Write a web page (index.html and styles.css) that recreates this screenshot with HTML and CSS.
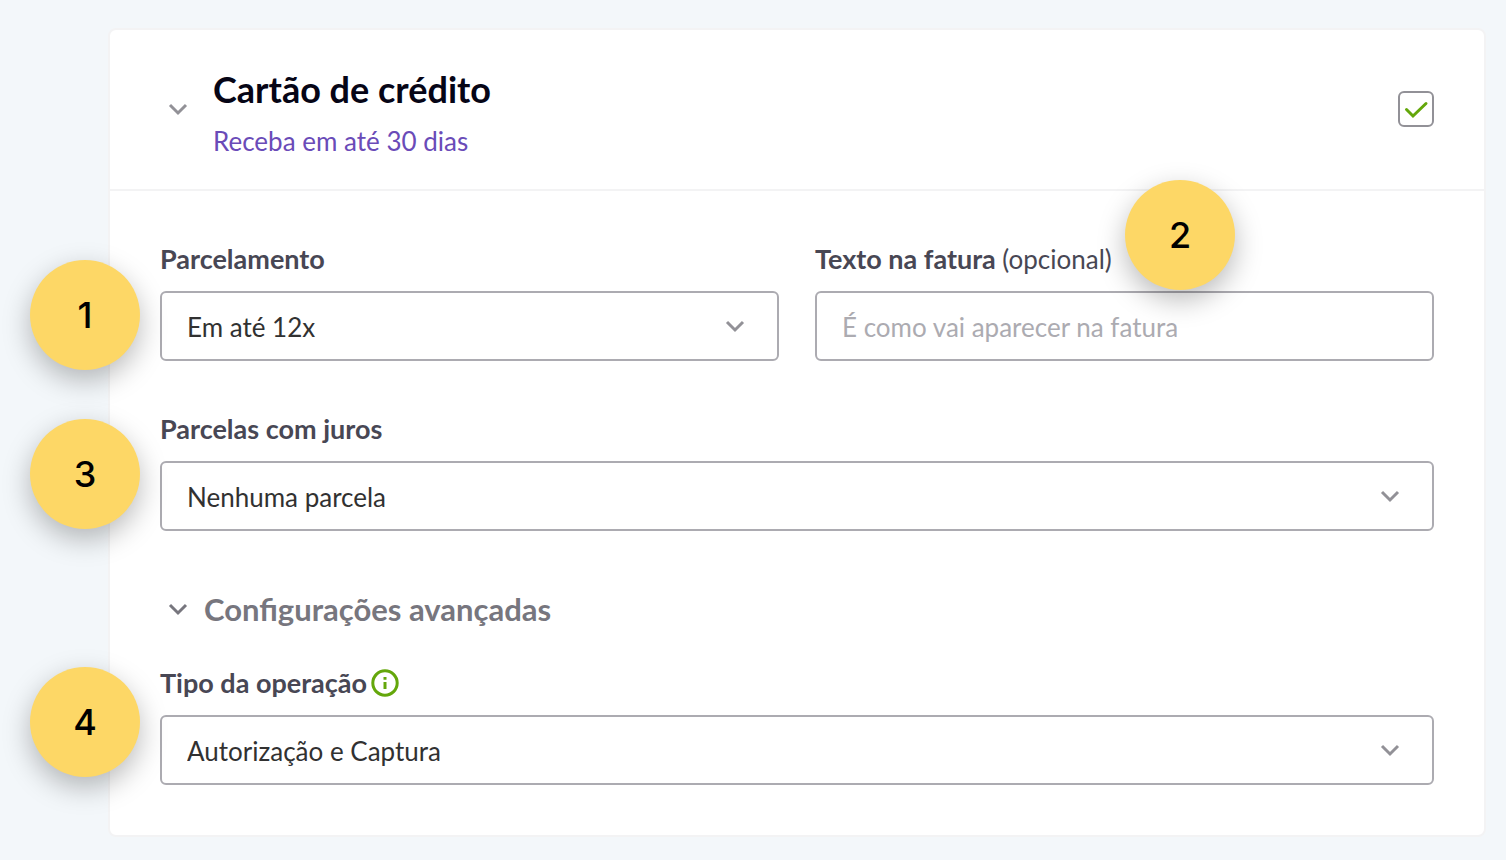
FILE: index.html
```html
<!DOCTYPE html>
<html lang="pt-BR">
<head>
<meta charset="utf-8">
<meta name="viewport" content="width=device-width, initial-scale=1">
<title>Cartão de crédito</title>
<link rel="stylesheet" href="styles.css">
</head>
<body>
<main class="page">
  <form class="card">
    <header class="card-header">
      <button class="icon-button" type="button" aria-label="Recolher cartão de crédito">
        <svg class="chevron" viewBox="0 0 36 36" aria-hidden="true"><path d="M10 14l8 8 8-8"/></svg>
      </button>
      <div class="heading">
        <h1 class="title">Cartão de crédito</h1>
        <p class="subtitle">Receba em até 30 dias</p>
      </div>
      <span class="check">
        <input class="check-input" type="checkbox" checked aria-label="Ativar cartão de crédito">
        <svg class="check-mark" viewBox="0 0 36 36" aria-hidden="true"><path d="M8.500 18.500l6.500 6.500L28 12.500"/></svg>
      </span>
    </header>
    <div class="card-body">
      <div class="row">
        <div class="field">
          <label class="label" for="parcelamento">Parcelamento</label>
          <div class="control">
            <select class="input" id="parcelamento"><option>Em até 12x</option></select>
            <svg class="chevron select-chevron" viewBox="0 0 36 36" aria-hidden="true"><path d="M10 14l8 8 8-8"/></svg>
          </div>
          <span class="badge badge-one">1</span>
        </div>
        <div class="field">
          <label class="label" for="fatura">Texto na fatura <span class="optional">(opcional)</span></label>
          <div class="control">
            <input class="input" id="fatura" type="text" placeholder="É como vai aparecer na fatura">
          </div>
          <span class="badge badge-two">2</span>
        </div>
      </div>
      <div class="field">
        <label class="label" for="juros">Parcelas com juros</label>
        <div class="control">
          <select class="input" id="juros"><option>Nenhuma parcela</option></select>
          <svg class="chevron select-chevron" viewBox="0 0 36 36" aria-hidden="true"><path d="M10 14l8 8 8-8"/></svg>
        </div>
        <span class="badge badge-three">3</span>
      </div>
      <section class="advanced">
        <button class="advanced-toggle" type="button">
          <svg class="chevron chevron-dark" viewBox="0 0 36 36" aria-hidden="true"><path d="M10 14l8 8 8-8"/></svg>
          Configurações avançadas
        </button>
        <div class="field">
          <div class="label-row">
            <label class="label" for="operacao">Tipo da operação</label>
            <svg class="info" viewBox="0 0 28 28" role="img" aria-label="Informação"><circle cx="14" cy="14" r="12.200"/><path d="M14 13v7M14 8v2.800"/></svg>
          </div>
          <div class="control">
            <select class="input" id="operacao"><option>Autorização e Captura</option></select>
            <svg class="chevron select-chevron" viewBox="0 0 36 36" aria-hidden="true"><path d="M10 14l8 8 8-8"/></svg>
          </div>
          <span class="badge badge-four">4</span>
        </div>
      </section>
    </div>
  </form>
</main>
</body>
</html>
```

FILE: styles.css
```css
* {
  box-sizing: border-box;
}

body {
  margin: 0;
  background: #f3f7fa;
  color: #484754;
  font-family: Lato, "Liberation Sans", sans-serif;
  font-size: 26px;
  line-height: 32px;
}

.page {
  padding: 28px 20px 22px 108px;
}

.card {
  background: #fff;
  border: 2px solid #f3f3f4;
  border-radius: 8px;
}

.card-header {
  display: flex;
  align-items: center;
  padding: 37px 50px 32px;
  border-bottom: 2px solid #f3f3f4;
}

.icon-button,
.advanced-toggle {
  padding: 0;
  border: 0;
  background: none;
  color: inherit;
  font: inherit;
  cursor: pointer;
}

.icon-button {
  display: flex;
  align-self: flex-start;
  margin-top: 24px;
}

.chevron {
  flex: none;
  width: 36px;
  height: 36px;
  fill: none;
  stroke: #929197;
  stroke-width: 3;
}

.chevron-dark {
  stroke: #77767e;
}

.heading {
  flex: 1;
  margin-left: 17px;
}

.title {
  margin: 0;
  color: #060516;
  font-size: 36px;
  font-weight: 700;
  line-height: 44px;
}

.subtitle {
  margin: 14px 0 0;
  color: #6a4bb8;
}

.check {
  position: relative;
  display: flex;
  align-self: flex-start;
  margin-top: 24px;
}

.check-input {
  appearance: none;
  width: 36px;
  height: 36px;
  margin: 0;
  border: 2px solid #929197;
  border-radius: 6px;
  background: #fff;
}

.check-mark {
  position: absolute;
  inset: 0;
  fill: none;
  stroke: #64a70b;
  stroke-width: 3;
  stroke-linecap: round;
  pointer-events: none;
}

.check-input:not(:checked) + .check-mark {
  display: none;
}

.card-body {
  display: flex;
  flex-direction: column;
  gap: 52px;
  padding: 52px 50px 50px;
}

.row {
  display: grid;
  grid-template-columns: 1fr 1fr;
  gap: 36px;
}

.field {
  position: relative;
}

.label {
  display: block;
  font-size: 27px;
  font-weight: 700;
}

.optional {
  font-size: 26px;
  font-weight: 400;
}

.label-row {
  display: flex;
  align-items: center;
  gap: 4px;
}

.info {
  width: 28px;
  height: 28px;
  fill: none;
  stroke: #64a70b;
  stroke-width: 3;
}

.control {
  position: relative;
  margin-top: 16px;
}

.input {
  display: block;
  appearance: none;
  width: 100%;
  height: 70px;
  padding: 2px 25px 0;
  border: 2px solid #acabb1;
  border-radius: 6px;
  background: #fff;
  color: #313131;
  font: inherit;
}

.input::placeholder {
  color: #acabb1;
  opacity: 1;
}

.select-chevron {
  position: absolute;
  top: 17px;
  right: 26px;
  pointer-events: none;
}

.advanced {
  padding-top: 6px;
}

.advanced-toggle {
  display: flex;
  align-items: center;
  gap: 8px;
  margin-bottom: 38px;
  color: #77767e;
  font-size: 31px;
  font-weight: 700;
  line-height: 40px;
}

.badge {
  position: absolute;
  display: flex;
  align-items: center;
  justify-content: center;
  width: 110px;
  height: 110px;
  border-radius: 50%;
  background: #fdd766;
  box-shadow: 0 10px 28px rgba(0, 0, 0, 0.27);
  color: #000;
  font-family: Inter, "Liberation Sans", sans-serif;
  font-size: 36px;
  font-weight: 500;
}

.badge-one {
  top: 17px;
  left: -130px;
}

.badge-two {
  top: -63px;
  left: 310px;
}

.badge-three {
  top: 6px;
  left: -130px;
}

.badge-four {
  top: 0;
  left: -130px;
}
```
